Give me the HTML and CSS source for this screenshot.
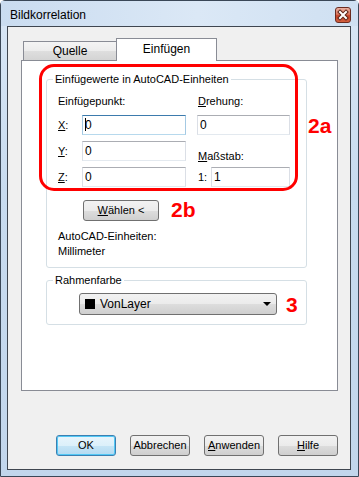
FILE: index.html
```html
<!DOCTYPE html>
<html lang="de">
<head>
    <meta charset="UTF-8">
    <meta name="viewport" content="width=device-width, initial-scale=1.0">
    <title>Bildkorrelation</title>
    <link rel="stylesheet" href="styles.css">
</head>
<body>
    <div class="window">
        <div class="titlebar">
            <span class="title">Bildkorrelation</span>
            <div class="close">
                <svg width="14" height="14" viewBox="0 0 14 14">
                    <path d="M4 4 L10 10 M10 4 L4 10" stroke="#5a2418" stroke-width="4" stroke-linecap="square"/>
                    <path d="M4 4 L10 10 M10 4 L4 10" stroke="#fff" stroke-width="2" stroke-linecap="square"/>
                </svg>
            </div>
        </div>

        <div class="client">
            <div class="tabs">
                <div class="tab">Quelle</div>
                <div class="tab active">Einfügen</div>
            </div>

            <div class="panel">
                <div class="group insert">
                    <div class="group-title">Einfügewerte in AutoCAD-Einheiten</div>
                    <div class="coords">
                        <div class="label head">Einfügepunkt:</div>
                        <div class="label head col3"><u>D</u>rehung:</div>

                        <div class="label"><u>X</u>:</div>
                        <div class="field focus"><span class="caret"></span>0</div>
                        <div class="field col3">0</div>

                        <div class="label"><u>Y</u>:</div>
                        <div class="field">0</div>
                        <div class="label col3 scale-label"><u>M</u>aßstab:</div>

                        <div class="label"><u>Z</u>:</div>
                        <div class="field">0</div>
                        <div class="scale col3">
                            <span class="label">1:</span>
                            <div class="field">1</div>
                        </div>
                    </div>
                    <div class="btn pick"><u>W</u>ählen &lt;</div>
                    <div class="units">AutoCAD-Einheiten:<br>Millimeter</div>
                </div>

                <div class="group frame-color">
                    <div class="group-title">Rahmenfarbe</div>
                    <div class="combo">
                        <span class="swatch"></span>
                        <span class="combo-text">VonLayer</span>
                        <span class="arrow"></span>
                    </div>
                </div>

                <!-- annotations -->
                <div class="ring"></div>
                <div class="note note-2a">2a</div>
                <div class="note note-2b">2b</div>
                <div class="note note-3">3</div>
            </div>

            <div class="buttons">
                <div class="btn default">OK</div>
                <div class="btn">Abbrechen</div>
                <div class="btn"><u>A</u>nwenden</div>
                <div class="btn"><u>H</u>ilfe</div>
            </div>
        </div>
    </div>
</body>
</html>
```

FILE: styles.css
```css
body {
    margin: 0;
    padding: 0;
    background-color: #fff;
    font-family: 'Liberation Sans', Arial, sans-serif;
}

.window {
    width: 359px;
    height: 477px;
    box-sizing: border-box;
    border: 1px solid #3a4757;
    border-radius: 5px 5px 0 0;
    background: linear-gradient(180deg, #d9e7f6 0%, #c8dbef 40%, #c2d6ec 100%);
    display: flex;
    flex-direction: column;
}

.titlebar {
    height: 25px;
    display: flex;
    justify-content: space-between;
    align-items: flex-start;
    background: linear-gradient(90deg, #cadcf0 0%, #dbe8f6 55%, #cfe0f2 100%);
}

.title {
    font-size: 12px;
    line-height: 16px;
    padding: 6px 0 0 9px;
    color: #000;
}

.close {
    width: 16px;
    height: 16px;
    box-sizing: border-box;
    margin: 6px 7px 0 0;
    border: 1px solid #6b2c20;
    border-radius: 3px;
    background: linear-gradient(180deg, #eab1a2 0%, #d9755c 45%, #c54328 55%, #d2603f 100%);
    display: flex;
    align-items: center;
    justify-content: center;
}

.client {
    flex: 1;
    margin: 0 7px 6px 6px;
    border: 1px solid #3f4650;
    background-color: #f0f0f0;
    padding: 11px 12px 0 13px;
    font-size: 11px;
    color: #000;
}

/* tabs */
.tabs {
    display: flex;
    align-items: flex-end;
    padding-left: 2px;
}

.tab {
    width: 94px;
    height: 19px;
    box-sizing: border-box;
    border: 1px solid #898c95;
    border-bottom: none;
    background: linear-gradient(180deg, #f4f4f4 0%, #ececec 50%, #dedede 51%, #d4d4d4 100%);
    text-align: center;
    line-height: 19px;
    font-size: 12px;
}

.tab.active {
    width: 101px;
    height: 23px;
    margin-bottom: -1px;
    margin-left: -1px;
    background: #fff;
    line-height: 20px;
    position: relative;
    z-index: 1;
}

.panel {
    position: relative;
    height: 331px;
    box-sizing: border-box;
    border: 1px solid #898c95;
    background-color: #fff;
    padding-top: 18px;
}

/* group boxes */
.group {
    width: 261px;
    box-sizing: border-box;
    margin-left: 24px;
    border: 1px solid #d5dfe5;
    border-radius: 3px;
}

.group-title {
    width: max-content;
    margin: -7px 0 0 6px;
    padding: 0 2px;
    line-height: 13px;
    background-color: #fff;
}

.insert {
    padding-bottom: 8px;
}

.frame-color {
    margin-top: 12px;
    padding-bottom: 9px;
}

.coords {
    display: grid;
    grid-template-columns: 24px 104px 11px 93px;
    grid-template-rows: 15px 20px 20px 20px;
    row-gap: 6px;
    margin: 8px 0 0 11px;
}

.label {
    align-self: center;
    line-height: 14px;
    white-space: nowrap;
}

.label.head {
    align-self: start;
    grid-column: 1 / 3;
}

.label.col3,
.col3 {
    grid-column: 4;
}

.label.head.col3 {
    grid-column: 4;
    padding-left: 1px;
}

.scale-label {
    align-self: end;
    padding-left: 1px;
    margin-bottom: -2px;
}

.field {
    height: 20px;
    box-sizing: border-box;
    border: 1px solid #dbdfe6;
    border-top-color: #abadb3;
    border-bottom-color: #e3e9ef;
    padding-left: 2px;
    line-height: 18px;
    font-size: 12px;
    background-color: #fff;
}

.field.focus {
    border-color: #a4c9e3;
    border-top-color: #3d7bad;
    border-bottom-color: #b7d9ed;
}

.caret {
    display: inline-block;
    width: 1px;
    height: 13px;
    background-color: #000;
    vertical-align: -2px;
    margin-right: -1px;
}

.scale {
    display: flex;
    align-items: center;
    padding-left: 1px;
}

.scale .label {
    width: 13px;
}

.scale .field {
    flex: 1;
}

/* buttons */
.btn {
    width: 60px;
    height: 21px;
    box-sizing: border-box;
    border: 1px solid #707070;
    border-radius: 3px;
    background: linear-gradient(180deg, #f2f2f2 0%, #ebebeb 50%, #dddddd 51%, #cfcfcf 100%);
    text-align: center;
    line-height: 19px;
    font-size: 11px;
}

.pick {
    width: 76px;
    margin: 13px 0 0 36px;
}

.btn.default {
    border-color: #3c7fb1;
    background: linear-gradient(180deg, #e8f5fc 0%, #dcf0fa 50%, #c5e5f6 51%, #b4daf1 100%);
    box-shadow: inset 0 0 0 1px #52c8f5;
}

.units {
    margin: 8px 0 0 11px;
    line-height: 15px;
}

/* combobox */
.combo {
    width: 198px;
    height: 22px;
    box-sizing: border-box;
    margin: 6px 0 0 32px;
    border: 1px solid #707070;
    border-radius: 3px;
    background: linear-gradient(180deg, #f2f2f2 0%, #ebebeb 50%, #dddddd 51%, #cfcfcf 100%);
    display: flex;
    align-items: center;
    padding-left: 5px;
    font-size: 12px;
}

.swatch {
    width: 10px;
    height: 10px;
    background-color: #000;
    margin-right: 5px;
}

.combo-text {
    flex: 1;
}

.arrow {
    width: 0;
    height: 0;
    border-left: 4px solid transparent;
    border-right: 4px solid transparent;
    border-top: 4px solid #000;
    margin-right: 5px;
}

/* red annotations */
.ring {
    position: absolute;
    left: 17px;
    top: 3px;
    width: 259px;
    height: 127px;
    box-sizing: border-box;
    border: 3px solid #ff0000;
    border-radius: 15px;
}

.note {
    position: absolute;
    color: #ff0000;
    font-size: 21px;
    font-weight: bold;
    line-height: 21px;
}

.note-2a {
    left: 286px;
    top: 54px;
}

.note-2b {
    left: 149px;
    top: 138px;
}

.note-3 {
    left: 264px;
    top: 233px;
}

.buttons {
    display: flex;
    justify-content: flex-end;
    gap: 14px;
    margin-top: 44px;
}
```
